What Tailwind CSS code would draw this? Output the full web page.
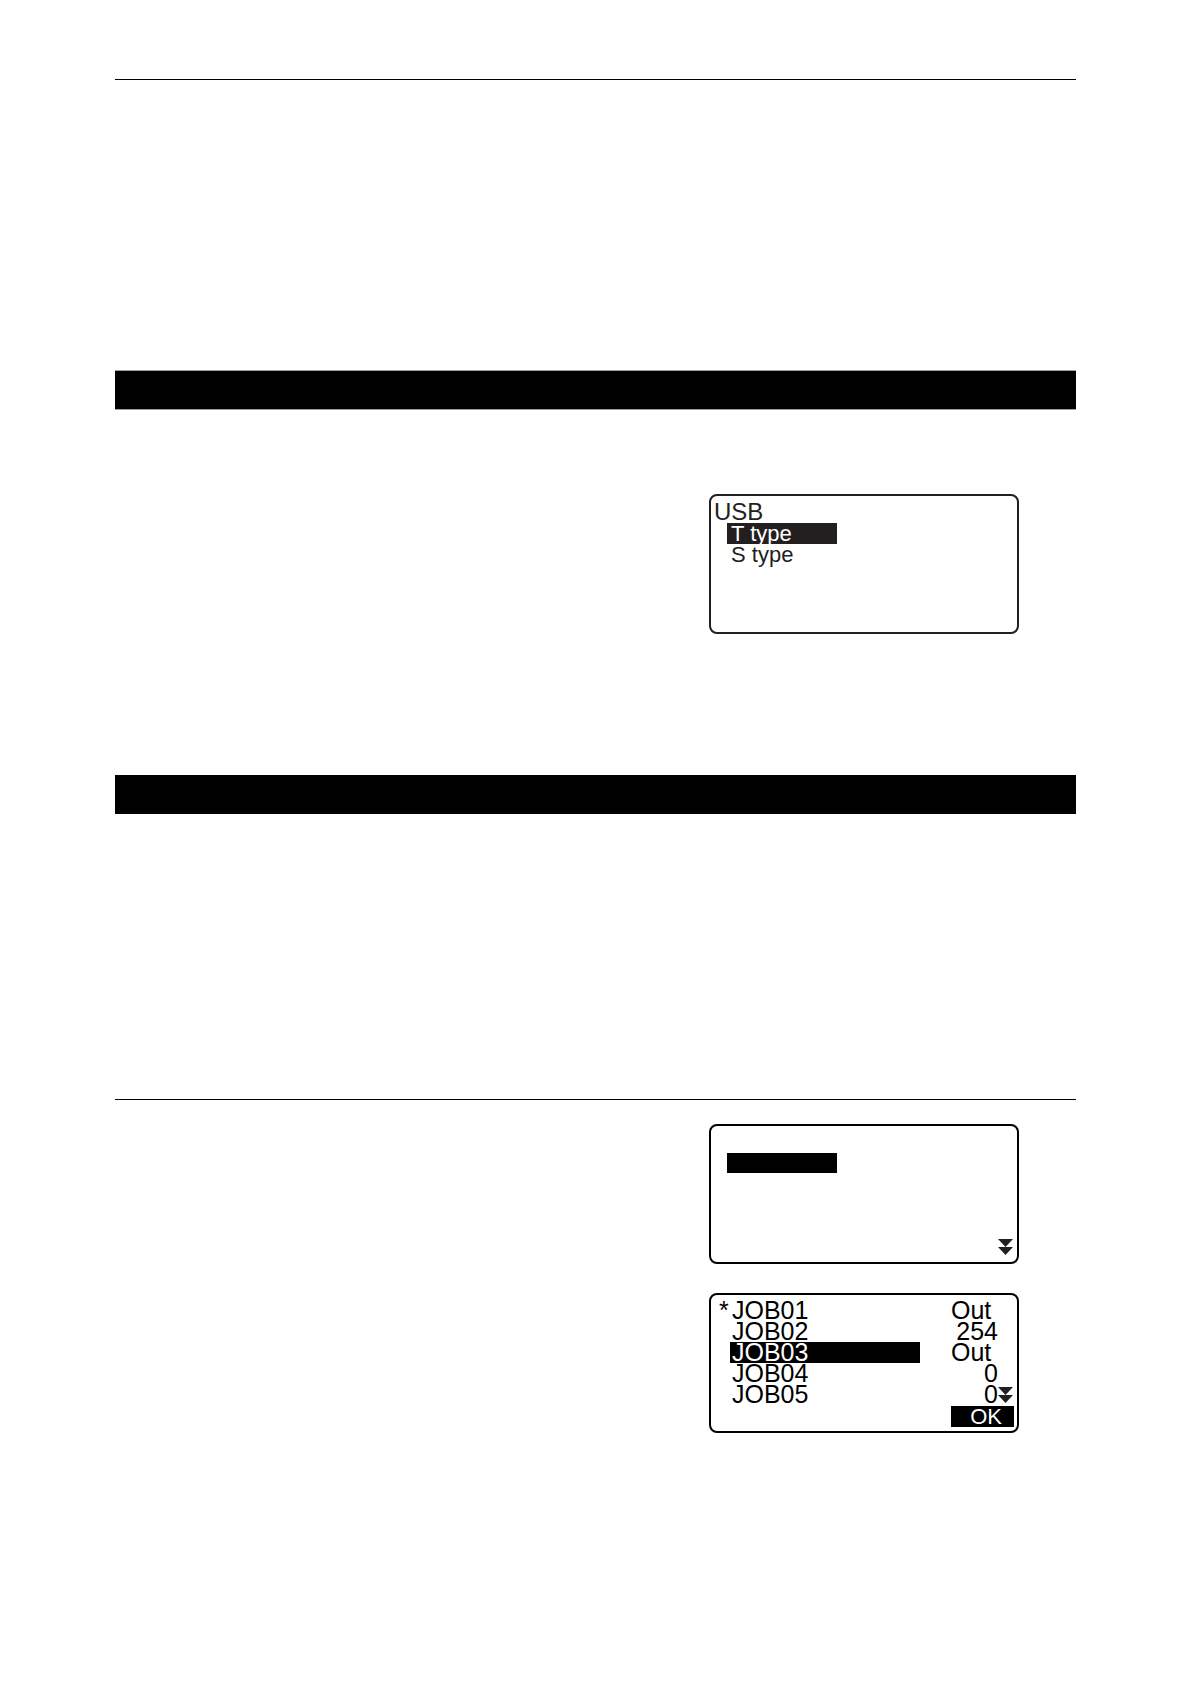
<!DOCTYPE html>
<html lang="en">
<head>
    <meta charset="UTF-8">
    <meta name="viewport" content="width=device-width, initial-scale=1.0">
    <title>USB / JOB</title>
    <script src="https://cdn.jsdelivr.net/npm/@tailwindcss/browser@4"></script>
</head>
<body class="bg-white text-black font-['Liberation_Sans',Arial,sans-serif]">
    <main class="min-h-screen px-[115px] pt-[79px] pb-16">
        <hr class="border-t border-black">

        <!-- USB type -->
        <section class="mt-[290px]">
            <div class="h-10 bg-black border-y border-gray-400"></div>
            <div class="mt-[84px] ml-auto mr-[57px] w-[310px] h-[140px] border-2 border-[#231f20] rounded-lg pt-1 text-[#231f20]">
                <h2 class="pl-[3px] text-2xl leading-[23px]">USB</h2>
                <div class="pl-4 text-[22px] leading-[21px]">
                    <button type="button" class="block w-[110px] h-[21px] pl-1 text-left bg-[#231f20] text-white">T type</button>
                    <button type="button" class="block w-[110px] h-[21px] pl-1 text-left">S type</button>
                </div>
            </div>
        </section>

        <!-- JOB selection -->
        <section class="mt-[141px]">
            <div class="h-[39px] bg-black"></div>
            <hr class="mt-[285px] border-t border-black">

            <div class="mt-6 ml-auto mr-[57px] w-[310px] h-[140px] border-2 border-black rounded-lg pt-[27px] pb-[7px] pl-4 pr-1 flex flex-col justify-between">
                <div class="w-[110px] h-5 bg-black"></div>
                <svg class="self-end w-[15px] h-4" viewBox="0 0 15 16" fill="#231f20">
                    <path d="M0 0h15L7.500 8zM0 8h15L7.500 16z"/>
                </svg>
            </div>

            <div class="mt-[29px] ml-auto mr-[57px] w-[310px] h-[140px] border-2 border-black rounded-lg pt-[5px]">
                <table class="w-full table-fixed text-[25px] leading-[21px]">
                    <colgroup>
                        <col class="w-[19px]">
                        <col class="w-[190px]">
                        <col class="w-[31px]">
                        <col class="w-[47px]">
                        <col>
                    </colgroup>
                    <tbody>
                        <tr class="h-[21px]">
                            <td class="p-0 pl-2">*</td>
                            <td class="p-0 pl-[2px]">JOB01</td>
                            <td class="p-0"></td>
                            <td class="p-0">Out</td>
                            <td class="p-0"></td>
                        </tr>
                        <tr class="h-[21px]">
                            <td class="p-0"></td>
                            <td class="p-0 pl-[2px]">JOB02</td>
                            <td class="p-0"></td>
                            <td class="p-0 text-right">254</td>
                            <td class="p-0"></td>
                        </tr>
                        <tr class="h-[21px]">
                            <td class="p-0"></td>
                            <td class="p-0 pl-[2px] bg-black text-white">JOB03</td>
                            <td class="p-0"></td>
                            <td class="p-0">Out</td>
                            <td class="p-0"></td>
                        </tr>
                        <tr class="h-[21px]">
                            <td class="p-0"></td>
                            <td class="p-0 pl-[2px]">JOB04</td>
                            <td class="p-0"></td>
                            <td class="p-0 text-right">0</td>
                            <td class="p-0"></td>
                        </tr>
                        <tr class="h-[21px]">
                            <td class="p-0"></td>
                            <td class="p-0 pl-[2px]">JOB05</td>
                            <td class="p-0"></td>
                            <td class="p-0 text-right">0</td>
                            <td class="p-0">
                                <svg class="block w-[15px] h-4" viewBox="0 0 15 16" fill="#231f20">
                                    <path d="M0 0h15L7.500 8zM0 8h15L7.500 16z"/>
                                </svg>
                            </td>
                        </tr>
                    </tbody>
                </table>
                <button type="button" class="block mt-px ml-auto mr-[3px] w-[63px] h-[21px] pr-3 text-right text-[22px] leading-[21px] bg-black text-white">OK</button>
            </div>
        </section>
    </main>
</body>
</html>
